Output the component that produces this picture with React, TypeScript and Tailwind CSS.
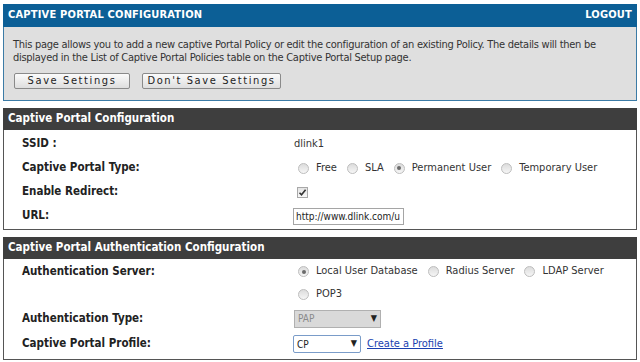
import type { ReactNode } from 'react'

const FONT = 'font-["DejaVu_Sans_Condensed","DejaVu_Sans",sans-serif]'

function Radio({ checked = false }: { checked?: boolean }) {
  return (
    <span className="relative inline-flex h-[11px] w-[11px] shrink-0 items-center justify-center rounded-full border border-[#bdbdbd] bg-gradient-to-b from-[#dcdcdc] to-[#f6f6f6]">
      {checked && <span className="h-[4px] w-[4px] rounded-full bg-[#6b6b6b]" />}
    </span>
  )
}

function RadioOption({ label, checked }: { label: string; checked?: boolean }) {
  return (
    <span className="inline-flex items-center gap-[7px] mr-[10px]">
      <Radio checked={checked} />
      <span>{label}</span>
    </span>
  )
}

function Row({ label, children, h = 'h-[24px]' }: { label?: string; children: ReactNode; h?: string }) {
  return (
    <div className={`flex items-center ${h}`}>
      <div className="w-[272px] shrink-0 pl-[18px] font-bold text-[11.5px] text-[#222]">{label}</div>
      <div className="flex items-center text-[11px] text-[#333]">{children}</div>
    </div>
  )
}

function SectionHeader({ title }: { title: string }) {
  return (
    <div className="flex h-[22px] items-center bg-[#3e3e3e] px-[5px] text-[11.5px] font-bold text-white">
      {title}
    </div>
  )
}

function Button({ children, w }: { children: ReactNode; w: string }) {
  return (
    <button className={`h-[16px] ${w} rounded-[2px] border border-[#8a8a8a] bg-gradient-to-b from-[#fbfbfb] to-[#dedede] text-center text-[11px] leading-[14px] tracking-[1.6px] text-[#222]`}>
      {children}
    </button>
  )
}

export default function App() {
  return (
    <div className={`h-[362px] w-[640px] overflow-hidden bg-white px-[3px] pt-[4px] ${FONT}`}>
      <div className="flex h-[23px] items-center justify-between bg-[#0c5f96] px-[5px] text-[11px] font-bold tracking-[0.2px] text-white">
        <span>CAPTIVE PORTAL CONFIGURATION</span>
        <span>LOGOUT</span>
      </div>
      <div className="h-[74px] border border-t-0 border-[#3b7ba6] bg-[#dfdfdf] px-[9px] pt-[11px] text-[11px] leading-[13px] tracking-[-0.28px] text-[#333]">
        <p className="whitespace-nowrap">
          This page allows you to add a new captive Portal Policy or edit the configuration of an existing Policy. The details will then be
          <br />
          displayed in the List of Captive Portal Policies table on the Captive Portal Setup page.
        </p>
        <div className="mt-[9px] flex gap-[12px] pl-[1px]">
          <Button w="w-[116px]">Save Settings</Button>
          <Button w="w-[139px]">Don't Save Settings</Button>
        </div>
      </div>

      <div className="mt-[7px]">
        <SectionHeader title="Captive Portal Configuration" />
        <div className="border border-t-0 border-[#555] pt-[2px] pb-[1px]">
          <Row label="SSID :">
            <span className="pl-[18px]">dlink1</span>
          </Row>
          <Row label="Captive Portal Type:">
            <span className="pl-[22px] flex items-center">
              <RadioOption label="Free" />
              <RadioOption label="SLA" />
              <RadioOption label="Permanent User" checked />
              <RadioOption label="Temporary User" />
            </span>
          </Row>
          <Row label="Enable Redirect:">
            <span className="pl-[21px] flex">
              <span className="flex h-[11px] w-[11px] items-center justify-center border border-[#a8a8a8] bg-gradient-to-b from-[#e4e4e4] to-[#f8f8f8]">
                <svg width="9" height="9" viewBox="0 0 9 9">
                  <path d="M1.5 4.8 L3.5 6.8 L7.6 1.8" stroke="#333" strokeWidth="1.6" fill="none" />
                </svg>
              </span>
            </span>
          </Row>
          <Row label="URL:">
            <span className="ml-[17px] flex h-[17px] w-[111px] items-center overflow-hidden whitespace-nowrap border border-[#a5a5a5] bg-white pl-[2px] text-[10px] text-[#222]">
              http://www.dlink.com/u
            </span>
          </Row>
        </div>
      </div>

      <div className="mt-[7px]">
        <SectionHeader title="Captive Portal Authentication Configuration" />
        <div className="border border-t-0 border-[#555] pt-[1px] pb-[2px]">
          <Row label="Authentication Server:" h="h-[23px]">
            <span className="pl-[22px] flex items-center">
              <RadioOption label="Local User Database" checked />
              <RadioOption label="Radius Server" />
              <RadioOption label="LDAP Server" />
            </span>
          </Row>
          <Row h="h-[23px]">
            <span className="pl-[22px] flex items-center">
              <RadioOption label="POP3" />
            </span>
          </Row>
          <Row label="Authentication Type:" h="h-[25px]">
            <span className="ml-[18px] flex h-[18px] w-[87px] items-center justify-between border border-[#b0b0b0] bg-[#d9d9d9] px-[3px] text-[10px] text-[#8a8a8a]">
              <span>PAP</span>
              <span className="text-[9px] text-[#222]">▼</span>
            </span>
          </Row>
          <Row label="Captive Portal Profile:" h="h-[26px]">
            <span className="ml-[17px] flex h-[18px] w-[68px] items-center justify-between rounded-[2px] border border-[#7a9cc9] bg-white px-[3px] text-[10px] text-[#222]">
              <span>CP</span>
              <span className="text-[9px]">▼</span>
            </span>
            <a className="ml-[6px] text-[11px] text-[#1a3fb0] underline">Create a Profile</a>
          </Row>
        </div>
      </div>
    </div>
  )
}
